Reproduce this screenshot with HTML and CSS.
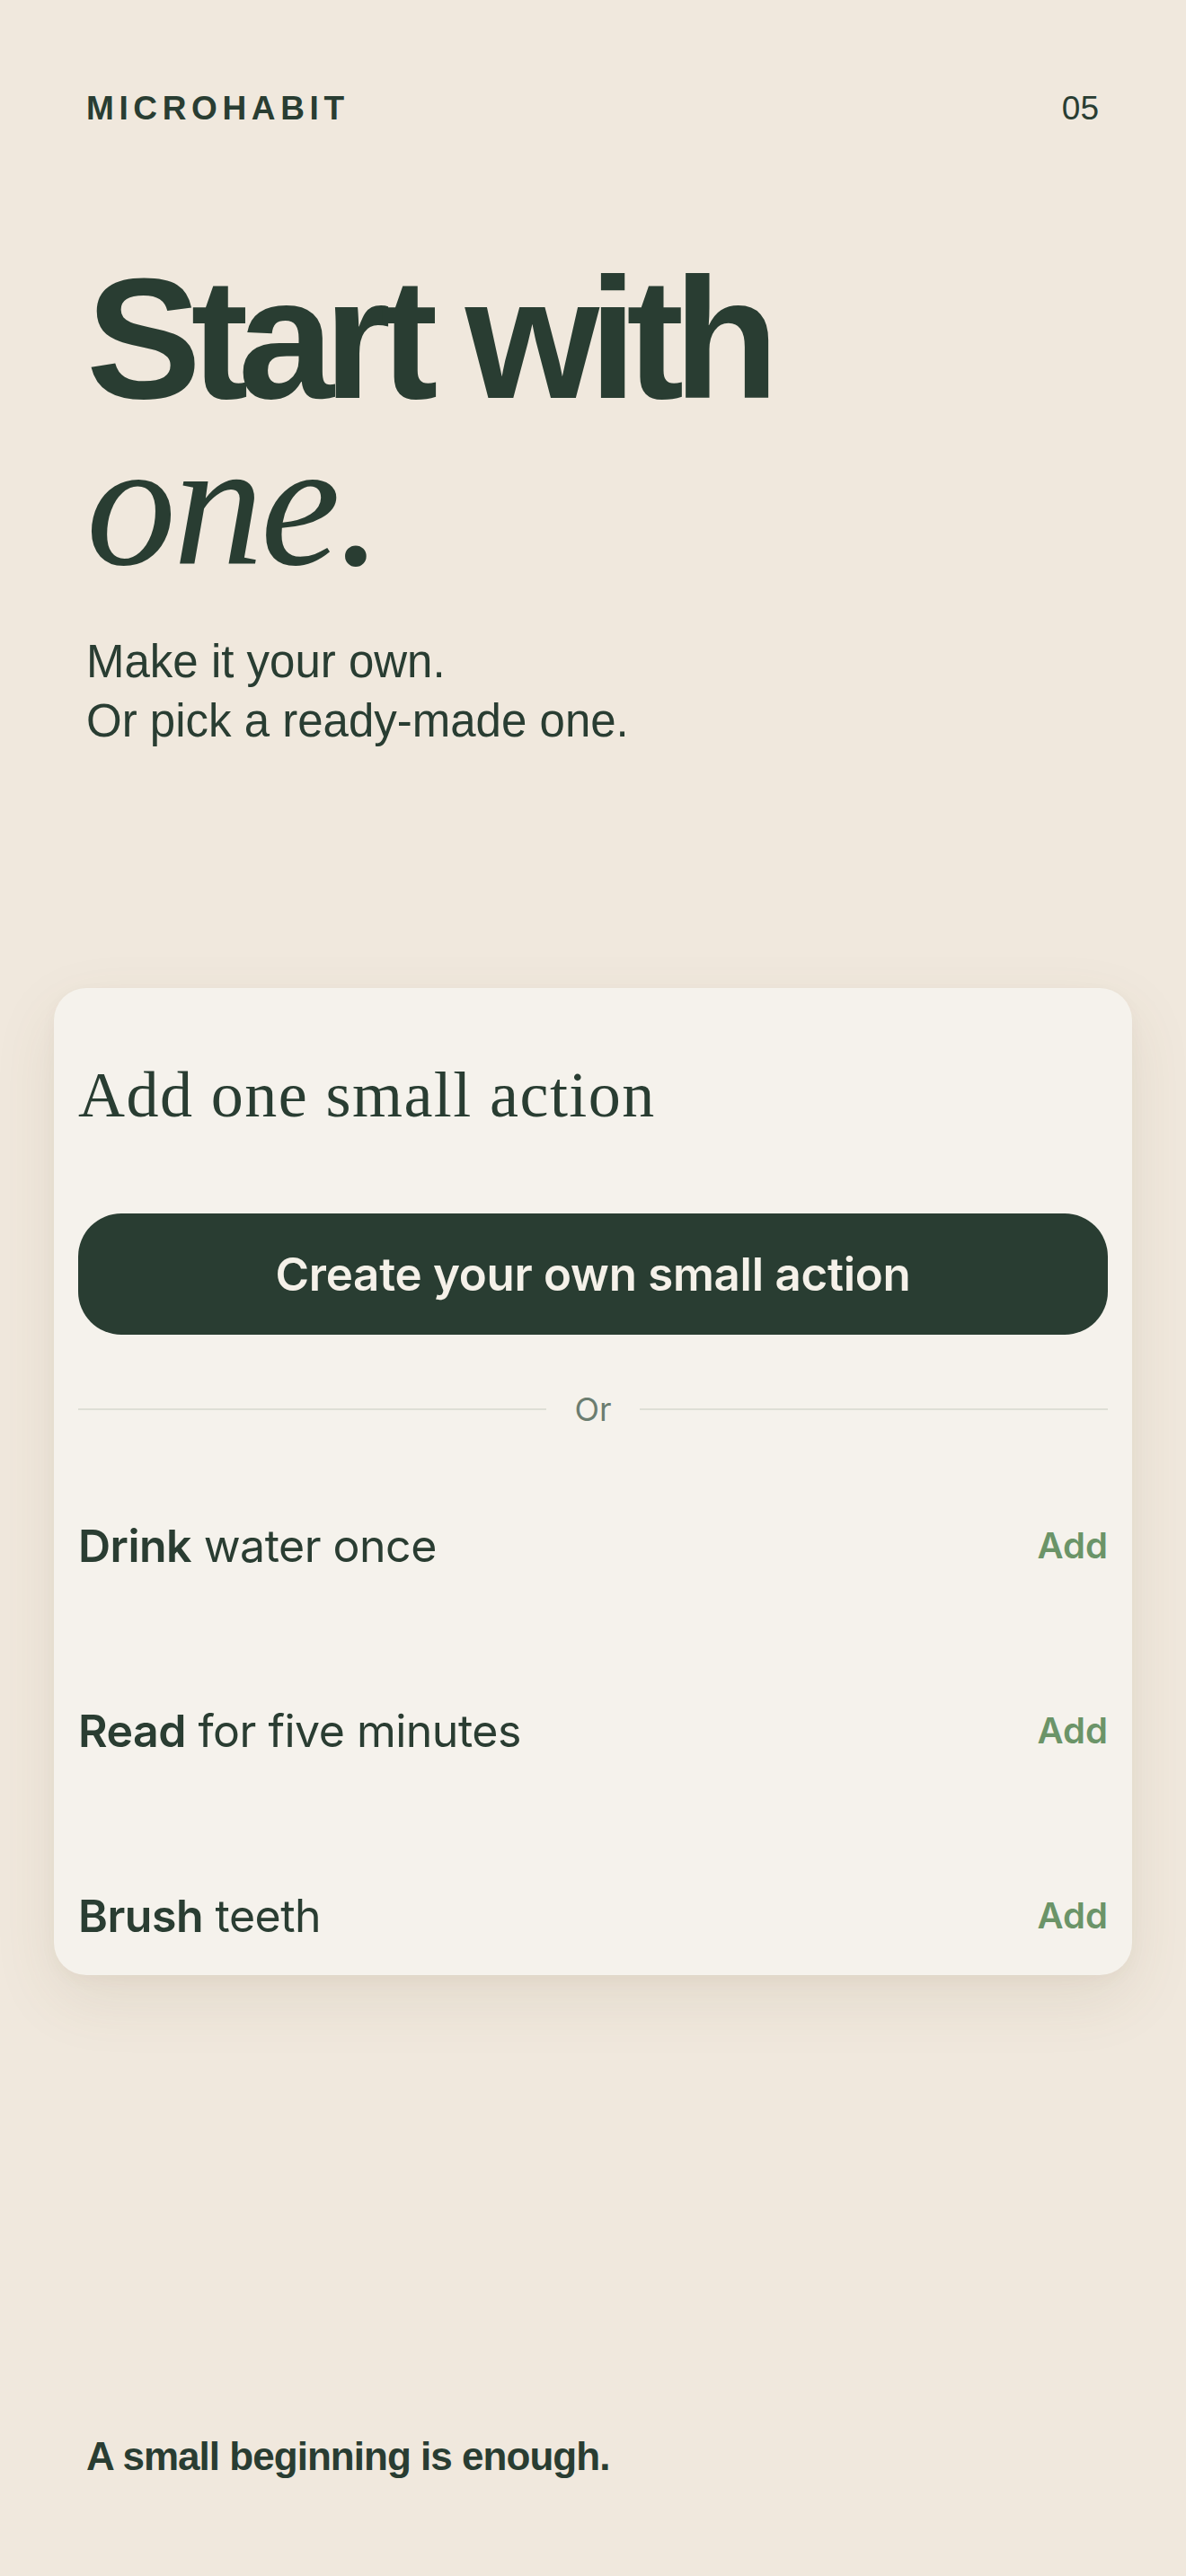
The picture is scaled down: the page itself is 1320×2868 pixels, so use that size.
FILE: index.html
```html
<!DOCTYPE html>
<html lang="en">
<head>
<meta charset="utf-8">
<title>Microhabit — Start with one</title>
<link rel="stylesheet" href="styles.css">
</head>
<body>
<div class="page">
  <header class="header">
    <span class="brand">MICROHABIT</span>
    <span class="step">05</span>
  </header>

  <h1 class="headline">
    <span class="headline-line">Start with</span>
    <em class="headline-accent">one.</em>
  </h1>

  <p class="subtitle">Make it your own.<br>Or pick a ready-made one.</p>

  <section class="card">
    <h2 class="card-title">Add one small action</h2>
    <button class="create-btn" type="button">Create your own small action</button>

    <div class="divider">
      <span class="divider-line"></span>
      <span class="divider-text">Or</span>
      <span class="divider-line"></span>
    </div>

    <ul class="actions">
      <li class="action-row">
        <span class="action-text"><strong>Drink</strong> water once</span>
        <button class="add-btn" type="button">Add</button>
      </li>
      <li class="action-row">
        <span class="action-text"><strong>Read</strong> for five minutes</span>
        <button class="add-btn" type="button">Add</button>
      </li>
      <li class="action-row">
        <span class="action-text"><strong>Brush</strong> teeth</span>
        <button class="add-btn" type="button">Add</button>
      </li>
    </ul>
  </section>

  <footer class="footer">A small beginning is enough.</footer>
</div>
</body>
</html>
```

FILE: styles.css
```css
* {
  box-sizing: border-box;
}

html, body {
  margin: 0;
  padding: 0;
}

body {
  background: #f0e8dd;
  color: #293d32;
  font-family: "Liberation Sans", Arial, Helvetica, sans-serif;
}

.page {
  min-height: 2868px;
  padding-top: 99px;
  display: flex;
  flex-direction: column;
}

.header {
  display: flex;
  justify-content: space-between;
  align-items: baseline;
  padding: 0 97px 0 96px;
  font-size: 37px;
  line-height: 44px;
}

.brand {
  font-weight: 700;
  letter-spacing: 0.152em;
}

.step {
  font-weight: 400;
}

.headline {
  margin: 142px 0 0;
  padding: 0 96px;
  font-size: 192px;
  line-height: 184px;
  font-weight: 700;
  letter-spacing: -0.06em;
}

.headline-line {
  display: block;
}

.headline-accent {
  display: block;
  font-family: "Liberation Serif", "Times New Roman", serif;
  font-style: italic;
  font-weight: 400;
  font-size: 200px;
  letter-spacing: -0.015em;
}

.subtitle {
  margin: 51px 0 0;
  padding: 0 96px;
  font-size: 51px;
  line-height: 66px;
  letter-spacing: 0;
}

.card {
  margin: 264px 60px 0;
  height: 1099px;
  padding: 79px 27px 0;
  overflow: hidden;
  background: #f5f2ec;
  border-radius: 36px;
  box-shadow: 0 26px 70px rgba(110, 85, 45, 0.10), 0 6px 18px rgba(110, 85, 45, 0.04);
}

.card-title {
  margin: 0;
  font-family: "Liberation Serif", "Times New Roman", serif;
  font-weight: 400;
  font-size: 72px;
  line-height: 80px;
  letter-spacing: 0.02em;
}

.create-btn {
  display: flex;
  align-items: center;
  justify-content: center;
  width: 100%;
  height: 135px;
  margin-top: 92px;
  padding: 0;
  border: 0;
  border-radius: 48px;
  background: #293d32;
  color: #f5f1e9;
  font-family: Inter, "Noto Sans", sans-serif;
  font-weight: 600;
  font-size: 51px;
  letter-spacing: -0.005em;
}

.divider {
  display: flex;
  align-items: center;
  gap: 31px;
  height: 44px;
  margin-top: 61px;
}

.divider-line {
  flex: 1;
  height: 2px;
  background: #dedfd6;
}

.divider-text {
  font-family: Inter, "Noto Sans", sans-serif;
  font-size: 36px;
  line-height: 44px;
  color: #6b7d70;
}

.actions {
  list-style: none;
  margin: 27px 0 0;
  padding: 0;
}

.action-row {
  display: flex;
  align-items: center;
  justify-content: space-between;
  height: 206px;
}

.action-text {
  font-family: Inter, "Noto Sans", sans-serif;
  font-size: 50px;
  line-height: 60px;
  color: #2a3d32;
  letter-spacing: -0.01em;
}

.action-text strong {
  font-weight: 600;
}

.add-btn {
  padding: 0;
  border: 0;
  background: none;
  font-family: Inter, "Noto Sans", sans-serif;
  font-weight: 600;
  font-size: 40px;
  line-height: 48px;
  color: #6b9468;
}

.footer {
  margin-top: 510px;
  padding: 0 96px;
  font-size: 44px;
  line-height: 52px;
  font-weight: 700;
  letter-spacing: -0.022em;
}
```
